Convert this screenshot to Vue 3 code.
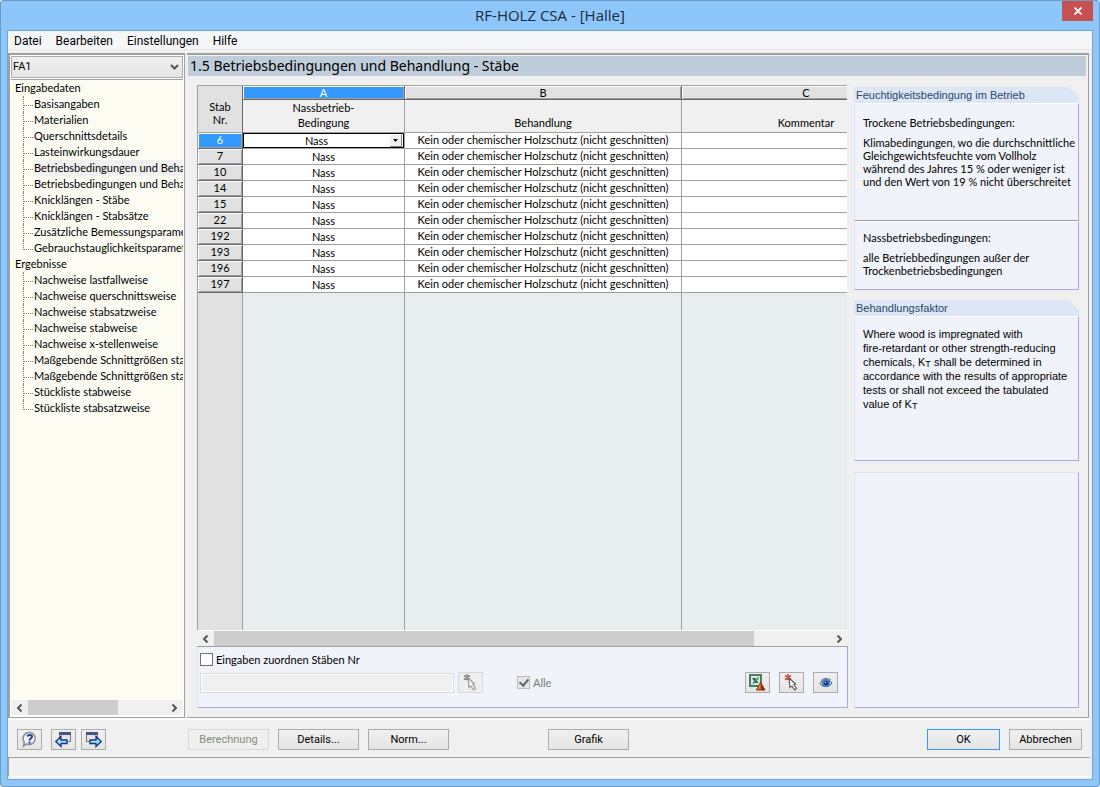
<script setup>
import { ref } from 'vue'

const menu = ['Datei', 'Bearbeiten', 'Einstellungen', 'Hilfe']

const tree = [
  {
    label: 'Eingabedaten',
    items: [
      'Basisangaben',
      'Materialien',
      'Querschnittsdetails',
      'Lasteinwirkungsdauer',
      'Betriebsbedingungen und Behandlung - Stäbe',
      'Betriebsbedingungen und Behandlung - Stabsätze',
      'Knicklängen - Stäbe',
      'Knicklängen - Stabsätze',
      'Zusätzliche Bemessungsparameter',
      'Gebrauchstauglichkeitsparameter',
    ],
  },
  {
    label: 'Ergebnisse',
    items: [
      'Nachweise lastfallweise',
      'Nachweise querschnittsweise',
      'Nachweise stabsatzweise',
      'Nachweise stabweise',
      'Nachweise x-stellenweise',
      'Maßgebende Schnittgrößen stabweise',
      'Maßgebende Schnittgrößen stabsatzweise',
      'Stückliste stabweise',
      'Stückliste stabsatzweise',
    ],
  },
]
const current = ref('Betriebsbedingungen und Behandlung - Stäbe')

const members = [6, 7, 10, 14, 15, 22, 192, 193, 196, 197]
const treatment = 'Kein oder chemischer Holzschutz (nicht geschnitten)'
const condition = ref('Nass')
const loadCase = ref('FA1')
const assign = ref(false)
const all = ref(true)
</script>

<template>
  <div class="window">
    <header class="titlebar">
      <h1>RF-HOLZ CSA - [Halle]</h1>
      <button class="close" type="button" aria-label="Schließen">
        <svg width="8" height="8" viewBox="0 0 8 8"><path d="M.5 .5l7 7M7.5 .5l-7 7" stroke="#fff" stroke-width="1.8" /></svg>
      </button>
    </header>

    <div class="client">
      <nav class="menu">
        <button v-for="m in menu" :key="m" type="button">{{ m }}</button>
      </nav>

      <div class="body">
        <aside class="side">
          <div class="combo">
            <select v-model="loadCase" aria-label="Bemessungsfall">
              <option>FA1</option>
            </select>
            <svg class="combo-arrow" width="9" height="6" viewBox="0 0 9 6"><path d="M1 1l3.500 3.500L8 1" fill="none" stroke="#555" stroke-width="2" /></svg>
          </div>
          <div class="tree">
            <section v-for="g in tree" :key="g.label">
              <div class="node">{{ g.label }}</div>
              <ul>
                <li v-for="item in g.items" :key="item">
                  <a href="#" :class="{ current: item === current }" @click.prevent="current = item">{{ item }}</a>
                </li>
              </ul>
            </section>
          </div>
          <div class="scroll">
            <button type="button" aria-label="Nach links"><svg width="7" height="8" viewBox="0 0 7 8"><path d="M5.500 .5L2 4l3.500 3.500" fill="none" stroke="#555" stroke-width="2" /></svg></button>
            <div class="track"><div class="thumb side-thumb"></div></div>
            <button type="button" aria-label="Nach rechts"><svg width="7" height="8" viewBox="0 0 7 8"><path d="M1.500 .5L5 4L1.500 7.500" fill="none" stroke="#555" stroke-width="2" /></svg></button>
          </div>
        </aside>

        <main class="main">
          <h2>1.5 Betriebsbedingungen und Behandlung - Stäbe</h2>
          <div class="content">
            <div class="left">
              <div class="grid">
                <table>
                  <colgroup><col class="c-no" /><col class="c-a" /><col class="c-b" /><col class="c-c" /></colgroup>
                  <thead>
                    <tr class="letters">
                      <th class="corner" rowspan="2">Stab<br />Nr.</th>
                      <th class="active">A</th>
                      <th>B</th>
                      <th>C</th>
                    </tr>
                    <tr class="names">
                      <th>Nassbetrieb-<br />Bedingung</th>
                      <th>Behandlung</th>
                      <th>Kommentar</th>
                    </tr>
                  </thead>
                  <tbody>
                    <tr v-for="(m, i) in members" :key="m">
                      <th :class="{ active: i === 0 }">{{ m }}</th>
                      <td v-if="i === 0" class="editing">
                        <div class="cell-edit">
                          <select v-model="condition" aria-label="Nassbetrieb-Bedingung">
                            <option>Nass</option>
                            <option>Trocken</option>
                          </select>
                          <span class="drop"><svg width="5" height="3" viewBox="0 0 5 3"><path d="M0 0h5L2.500 3z" fill="#000" /></svg></span>
                        </div>
                      </td>
                      <td v-else class="cond">Nass</td>
                      <td>{{ treatment }}</td>
                      <td></td>
                    </tr>
                    <tr class="filler"><td class="no"></td><td></td><td></td><td></td></tr>
                  </tbody>
                </table>
              </div>
              <div class="scroll grid-scroll">
                <button type="button" aria-label="Nach links"><svg width="7" height="8" viewBox="0 0 7 8"><path d="M5.500 .5L2 4l3.500 3.500" fill="none" stroke="#555" stroke-width="2" /></svg></button>
                <div class="track"><div class="thumb grid-thumb"></div></div>
                <button type="button" aria-label="Nach rechts"><svg width="7" height="8" viewBox="0 0 7 8"><path d="M1.500 .5L5 4L1.500 7.500" fill="none" stroke="#555" stroke-width="2" /></svg></button>
              </div>
              <div class="assign">
                <label class="check"><input v-model="assign" type="checkbox" /><span>Eingaben zuordnen Stäben Nr</span></label>
                <div class="assign-row">
                  <input class="members" type="text" disabled aria-label="Stäbe Nr." />
                  <button class="tool off" type="button" disabled aria-label="Stäbe wählen">
                    <svg width="15" height="17" viewBox="0 0 15 17"><path d="M1 1.500l6 4M7 1.500l-6 4M4 0v6" stroke="#8f8f8f" stroke-width="1.800" /><path d="M5 4l6.500 6-1.500.5 2.500 4-2 1.500L8 12l-2 1.500z" fill="#f6f6f6" stroke="#9a9a9a" stroke-width="1.200" /></svg>
                  </button>
                  <label class="check all"><input v-model="all" type="checkbox" disabled /><span>Alle</span></label>
                  <div class="tools">
                    <button class="tool" type="button" aria-label="Excel-Export">
                      <svg width="17" height="17" viewBox="0 0 17 17"><rect x="1" y="1" width="11" height="11" fill="#d9eadb" stroke="#4d7f5c" stroke-width="2" /><path d="M3 4h3l3.500 5h-3z" fill="#27645a" /><path d="M9.500 3.500L4 9.500" stroke="#3d8c70" stroke-width="1.500" /><path d="M11.500 8.500l4.500 7.500H7.500z" fill="#d9541e" stroke="#7c2d12" /><path d="M11.500 8l1 8h3.500z" fill="#8f2a12" /><path d="M11 10.500l-1.500 5" stroke="#f79a33" /></svg>
                    </button>
                    <button class="tool" type="button" aria-label="Im Grafikfenster wählen">
                      <svg width="15" height="17" viewBox="0 0 15 17"><path d="M1 1.500l6 4M7 1.500l-6 4M4 0v6" stroke="#d0584a" stroke-width="1.800" /><path d="M5 4l6.500 6-1.500.5 2.500 4-2 1.500L8 12l-2 1.500z" fill="#fff" stroke="#5a5a5a" stroke-width="1.200" /></svg>
                    </button>
                    <button class="tool" type="button" aria-label="Ansicht">
                      <svg width="14" height="12" viewBox="0 0 14 12"><path d="M1 6.500C3.500 2 10 1.500 13 6c-2.500 4.500-9 5-12 .5z" fill="#dfe9f7" stroke="#4a4f5c" /><circle cx="7" cy="6" r="4" fill="#3a7bd5" /><circle cx="7" cy="6" r="2" fill="#0c1f4d" /><circle cx="6.500" cy="5.500" r=".8" fill="#fff" /><path d="M2 3.500C5 .8 9 .8 12 3" fill="none" stroke="#6d7380" /></svg>
                    </button>
                  </div>
                </div>
              </div>
            </div>

            <aside class="info">
              <section class="panel p1">
                <h3>Feuchtigkeitsbedingung im Betrieb</h3>
                <div class="box dry">
                  <p>Trockene Betriebsbedingungen:</p>
                  <p>Klimabedingungen, wo die durchschnittliche<br />Gleichgewichtsfeuchte vom Vollholz<br />während des Jahres 15 % oder weniger ist<br />und den Wert von 19 % nicht überschreitet</p>
                </div>
                <div class="box wet">
                  <p>Nassbetriebsbedingungen:</p>
                  <p>alle Betriebbedingungen außer der<br />Trockenbetriebsbedingungen</p>
                </div>
              </section>
              <section class="panel p2">
                <h3>Behandlungsfaktor</h3>
                <div class="box factor">
                  <p>Where wood is impregnated with<br />fire-retardant or other strength-reducing<br />chemicals, K<sub>T</sub> shall be determined in<br />accordance with the results of appropriate<br />tests or shall not exceed the tabulated<br />value of K<sub>T</sub></p>
                </div>
              </section>
              <section class="panel p3"></section>
            </aside>
          </div>
        </main>
      </div>

      <footer class="footer">
        <div class="group icons">
          <button class="btn icon" type="button" aria-label="Hilfe">
            <svg width="17" height="17" viewBox="0 0 17 17"><path d="M9 1.500a6 6 0 1 1-3.500 11.300L2.500 15l.8-4A6 6 0 0 1 9 1.500z" fill="#f4f5f8" stroke="#888c94" stroke-width="1.500" /><path d="M6.500 5.500C6.800 3.500 11 3.300 11 5.700c0 1.800-2.500 1.800-2.500 3.800" fill="none" stroke="#27408f" stroke-width="2" /><rect x="7.500" y="10.500" width="2" height="2" fill="#27408f" /></svg>
          </button>
          <button class="btn icon nav-back" type="button" aria-label="Vorherige Maske">
            <svg width="17" height="17" viewBox="0 0 17 17"><rect x="4.500" y="1.500" width="11" height="9" fill="#e4e4e6" stroke="#777" /><rect x="4" y="1" width="12" height="3" fill="#4a5472" /><path d="M7 2.500h6" stroke="#3558c0" /><path d="M.8 10.500L6 5.500v3.500h6v3.500H6V15.500z" fill="#9fe0fa" stroke="#17357e" stroke-width="1.300" /></svg>
          </button>
          <button class="btn icon" type="button" aria-label="Nächste Maske">
            <svg width="17" height="17" viewBox="0 0 17 17"><rect x="1.500" y="1.500" width="11" height="9" fill="#e4e4e6" stroke="#777" /><rect x="1" y="1" width="12" height="3" fill="#4a5472" /><path d="M4 2.500h6" stroke="#3558c0" /><path d="M16.200 10.500L11 5.500v3.500H5v3.500h6V15.500z" fill="#9fe0fa" stroke="#17357e" stroke-width="1.300" /></svg>
          </button>
        </div>
        <div class="group">
          <button class="btn" type="button" disabled>Berechnung</button>
          <button class="btn" type="button">Details...</button>
          <button class="btn" type="button">Norm...</button>
        </div>
        <button class="btn grafik" type="button">Grafik</button>
        <div class="group confirm">
          <button class="btn primary" type="button">OK</button>
          <button class="btn" type="button">Abbrechen</button>
        </div>
      </footer>
      <div class="status"></div>
    </div>
  </div>
</template>

<style>
html,
body {
  background: #fff;
}
</style>

<style scoped>
* {
  box-sizing: border-box;
}
.window {
  display: flex;
  flex-direction: column;
  height: 100vh;
  min-height: 640px;
  padding: 0 6px 6px;
  border: 1px solid #6b9bc5;
  border-radius: 3px;
  background: #8dc7fa;
  color: #000;
  font: 11px/16px Roboto, "Noto Sans", sans-serif;
}
button,
select,
input {
  margin: 0;
  padding: 0;
  font: inherit;
  color: inherit;
}
.titlebar {
  position: relative;
  flex: none;
  height: 29px;
}
h1 {
  margin: 0;
  text-align: center;
  font-family: "Open Sans", "Noto Sans", sans-serif;
  font-size: 15px;
  font-weight: 400;
  line-height: 28px;
  color: #1b2a3a;
}
.close {
  position: absolute;
  top: 0;
  right: 0;
  display: grid;
  place-items: center;
  width: 31px;
  height: 20px;
  border: 0;
  background: #c75050;
}
.client {
  flex: 1;
  display: flex;
  flex-direction: column;
  min-height: 0;
  border: 1px solid #74a5d2;
  background: #f0f0f0;
}
.menu {
  flex: none;
  display: flex;
  gap: 14px;
  height: 19px;
  margin-bottom: 3px;
  padding-left: 6px;
  background: #f5f6f7;
  border-bottom: 1px solid #e8e8e8;
}
.menu button {
  border: 0;
  background: none;
  font-size: 12px;
  line-height: 20px;
}
.body {
  flex: 1;
  display: flex;
  gap: 2px;
  min-height: 0;
  padding-right: 3px;
  border-bottom: 2px solid #fff;
}
.side {
  flex: none;
  display: flex;
  flex-direction: column;
  width: 177px;
  border: 1px solid #a0a0a0;
  border-width: 2px 1px 1px 2px;
  background: #fff;
  padding: 1px 1px 2px;
}
.combo {
  flex: none;
  position: relative;
  height: 22px;
  margin-bottom: 1px;
}
.combo select {
  width: 100%;
  height: 22px;
  padding-left: 1px;
  appearance: none;
  border: 1px solid #acacac;
  border-radius: 0;
  background: linear-gradient(#f0f0f0, #e5e5e5);
}
.combo-arrow {
  position: absolute;
  top: 8px;
  right: 4px;
  pointer-events: none;
}
.tree {
  flex: 1;
  min-height: 0;
  overflow: hidden;
  border-top: 1px solid #a0a0a0;
  background: #fcfcf3;
  font-family: Lato, "Liberation Sans", sans-serif;
}
.node {
  padding-left: 4px;
}
.tree ul {
  margin: 0;
  padding: 0 0 0 12px;
  list-style: none;
}
.tree li {
  position: relative;
  height: 16px;
  padding-left: 10px;
  white-space: nowrap;
}
.tree li::before {
  content: "";
  position: absolute;
  left: 0;
  top: 0;
  width: 9px;
  height: 9px;
  border-left: 1px dotted #808080;
  border-bottom: 1px dotted #808080;
}
.tree li:not(:last-child)::after {
  content: "";
  position: absolute;
  left: 0;
  top: 9px;
  height: 7px;
  border-left: 1px dotted #808080;
}
.tree a {
  display: block;
  padding-left: 1px;
  color: inherit;
  text-decoration: none;
}
.tree a.current {
  background: #f0f0f0;
}
.scroll {
  flex: none;
  display: flex;
  height: 15px;
  background: #f0f0f0;
}
.scroll button {
  display: grid;
  place-items: center;
  width: 17px;
  border: 0;
  background: none;
}
.track {
  flex: 1;
}
.thumb {
  height: 100%;
  background: #cdcdcd;
}
.side-thumb {
  width: 65%;
}
.grid-thumb {
  width: 87.5%;
}
.main {
  flex: 1;
  display: flex;
  flex-direction: column;
  min-width: 0;
  padding: 1px 2px 0 1px;
  border: solid #a0a0a0;
  border-width: 2px 1px 1px 0;
}
h2 {
  flex: none;
  margin: 0 0 9px;
  padding-left: 2px;
  background: #bfccda;
  font-family: "Noto Sans", sans-serif;
  font-size: 14px;
  font-weight: 400;
  line-height: 20px;
}
.content {
  flex: 1;
  display: flex;
  gap: 6px;
  min-height: 0;
  padding: 0 7px 9px 9px;
}
.left {
  flex: 1;
  display: flex;
  flex-direction: column;
  min-width: 0;
  font-family: Lato, "Liberation Sans", sans-serif;
}
.grid {
  flex: 1;
  min-height: 0;
  overflow: hidden;
  border: solid #a0a0a0;
  border-width: 1px 0 0 1px;
  margin-right: 1px;
}
table {
  width: 733px;
  height: 100%;
  table-layout: fixed;
  border-collapse: separate;
  border-spacing: 0;
}
.c-no {
  width: 45px;
}
.c-a {
  width: 162px;
}
.c-b {
  width: 277px;
}
.c-c {
  width: 249px;
}
th,
td {
  height: 16px;
  padding: 0 0 1px;
  border: solid #a0a0a0;
  border-width: 0 1px 1px 0;
  background: #fff;
  text-align: center;
  font-weight: 400;
  line-height: 14px;
  white-space: nowrap;
  overflow: hidden;
}
.letters th {
  height: 14px;
  padding: 0;
  line-height: 13px;
  border-color: #696969;
  background: #e1e1e1;
  box-shadow: inset 1px 1px #fff, inset -1px -1px #a0a0a0;
}
.letters .corner {
  height: 47px;
  line-height: 13px;
  padding-top: 8px;
  background: #e1e1e1;
  border-bottom-color: #a0a0a0;
  box-shadow: none;
}
.letters .active,
tbody th.active {
  background: #3399ff;
  color: #fff;
}
.names th {
  height: 33px;
  background: #f0f0f0;
  line-height: 15px;
  vertical-align: bottom;
  padding: 0 0 2px;
}
tbody th {
  border-color: #696969;
  background: #e1e1e1;
  box-shadow: inset 1px 1px #fff, inset -1px -1px #a0a0a0;
}
.cond {
  padding: 1px 0 0;
}
.editing {
  padding: 0;
}
.cell-edit {
  position: relative;
  height: 15px;
  border: 1px solid #000;
}
.cell-edit select {
  display: block;
  width: 100%;
  height: 13px;
  padding-right: 14px;
  appearance: none;
  border: 0;
  background: #fff;
  text-align: center;
  text-align-last: center;
  line-height: 13px;
}
.drop {
  position: absolute;
  top: 1px;
  right: 1px;
  display: grid;
  place-items: center;
  width: 12px;
  height: 12px;
  background: #f0f0f0;
  border: solid #808080;
  border-width: 0 1px 1px 0;
  pointer-events: none;
}
.filler td {
  height: auto;
  border-bottom: 0;
  background: #e8eeee;
}
.filler .no {
  background: #e1e1e1;
}
.grid-scroll {
  height: 17px;
  border-top: 1px solid #fff;
  border-bottom: 1px solid #a0a0a0;
}
.assign {
  flex: none;
  height: 61px;
  padding: 6px 9px 0 2px;
  border: solid #dde6f4;
  border-width: 0 1px 1px 1px;
  border-right-color: #aaa7ea;
  border-bottom-color: #aaa7ea;
  background: #f0f3f9;
}
.check {
  display: flex;
  align-items: center;
  gap: 3px;
  height: 13px;
}
.check input {
  flex: none;
  display: grid;
  place-items: center;
  width: 13px;
  height: 13px;
  appearance: none;
  border: 1px solid #707070;
  background: #fff;
}
.check input:disabled {
  border-color: #bcbcbc;
  background: #e6e6e6;
}
.check input:checked::before {
  content: "";
  width: 4px;
  height: 7px;
  margin-bottom: 2px;
  border: solid #666;
  border-width: 0 2px 2px 0;
  transform: rotate(40deg);
}
.assign-row {
  display: flex;
  align-items: center;
  margin-top: 6px;
}
.members {
  width: 254px;
  height: 20px;
  margin-right: 4px;
  border: 1px solid #d9d9d9;
  background: #f0f0f0;
  box-shadow: inset 0 0 0 1px #fff;
}
.tool {
  display: grid;
  place-items: center;
  width: 25px;
  height: 21px;
  border: 1px solid #acacac;
  background: linear-gradient(#f0f0f0, #e5e5e5);
}
.tool.off {
  border-color: #d9d9d9;
  background: #efefef;
}
.all {
  margin-left: 34px;
  color: #6d7a70;
}
.tools {
  display: flex;
  gap: 9px;
  margin-left: auto;
}
.info {
  flex: none;
  display: flex;
  flex-direction: column;
  width: 225px;
  padding-top: 2px;
}
h3 {
  margin: 0;
  padding-left: 2px;
  height: 16px;
  background: #dde6f4;
  clip-path: polygon(0 0, calc(100% - 10px) 0, 100% 10px, 100% 100%, 0 100%);
  color: #27496b;
  font-family: "Liberation Sans", Arial, sans-serif;
  font-size: 11px;
  font-weight: 400;
  line-height: 17px;
}
.box {
  padding: 0 8px;
  border: solid #dde6f4;
  border-width: 1px 1px 0 1px;
  border-top-color: #fff;
  border-right-color: #aaa7ea;
  background: #f0f3f9;
  font-family: Lato, "Liberation Sans", sans-serif;
  white-space: nowrap;
}
.box p {
  margin: 0;
  line-height: 13px;
}
.box p + p {
  margin-top: 7px;
}
.dry {
  height: 118px;
  padding-top: 12px;
  border-bottom: 1px solid #a0a0a0;
}
.wet {
  height: 69px;
  padding-top: 9px;
  border-bottom: 1px solid #aaa7ea;
}
.p2 {
  margin-top: 10px;
}
.factor {
  height: 145px;
  padding-top: 10px;
  border-bottom: 1px solid #aaa7ea;
  font-family: "Liberation Sans", Arial, sans-serif;
}
.factor p {
  line-height: 14px;
}
sub {
  font-size: 9px;
  line-height: 0;
  vertical-align: -1px;
}
.p3 {
  flex: 1;
  margin-top: 11px;
  border: 1px solid #dde6f4;
  border-right-color: #aaa7ea;
  border-bottom-color: #aaa7ea;
  background: #f0f3f9;
}
.footer {
  flex: none;
  display: flex;
  align-items: flex-start;
  height: 37px;
  padding: 9px 10px 0 9px;
}
.group {
  display: flex;
  gap: 9px;
}
.icons {
  gap: 5px;
  margin-right: 82px;
}
.nav-back {
  margin-left: 4px;
}
.btn {
  display: grid;
  place-items: center;
  width: 81px;
  height: 21px;
  border: 1px solid #acacac;
  background: linear-gradient(#f0f0f0, #e5e5e5);
}
.btn.icon {
  width: 25px;
}
.btn:disabled {
  border-color: #d9d9d9;
  background: #efefef;
  color: #838d7c;
}
.grafik {
  margin-left: 99px;
}
.confirm {
  margin-left: auto;
}
.confirm .btn {
  width: 73px;
}
.confirm .primary {
  border-color: #3399ff;
}
.status {
  flex: none;
  height: 20px;
  margin: 0 2px 2px 0;
  border: solid #a0a0a0;
  border-width: 1px 0 1px 1px;
  border-bottom-color: #fff;
}
</style>
